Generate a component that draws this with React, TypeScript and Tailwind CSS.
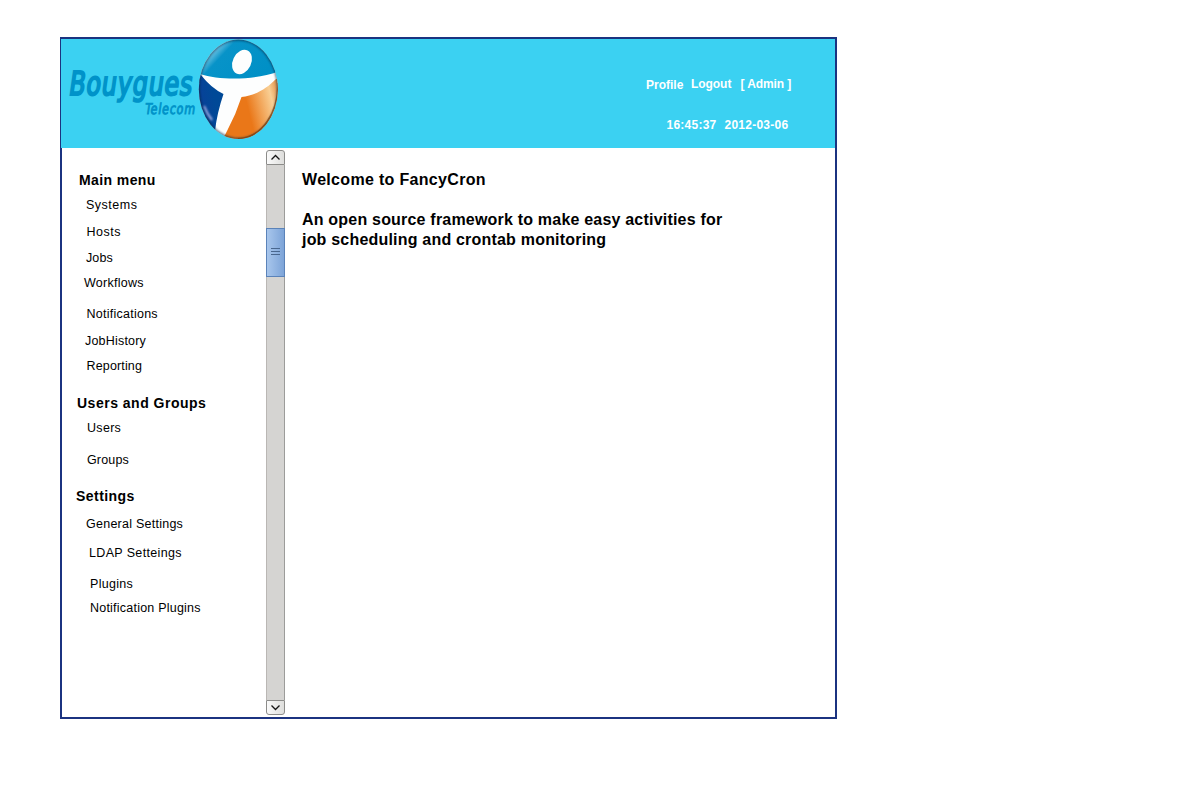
type Entry = { label: string; className: string };

const heading = "text-[14px] font-bold";
const item = "text-[12.5px]";

const menu: Entry[] = [
  { label: "Main menu", className: `${heading} mt-[22px] ml-[17px] tracking-[0.4px]` },
  { label: "Systems", className: `${item} mt-[5px] ml-[24px] tracking-[0.5px]` },
  { label: "Hosts", className: `${item} mt-[7px] ml-[24.5px] tracking-[0.5px]` },
  { label: "Jobs", className: `${item} mt-[6px] ml-[24px] tracking-[0.1px]` },
  { label: "Workflows", className: `${item} mt-[5px] ml-[22px] tracking-[0.25px]` },
  { label: "Notifications", className: `${item} mt-[11px] ml-[24.5px] tracking-[0.25px]` },
  { label: "JobHistory", className: `${item} mt-[7px] ml-[23px] tracking-[0.2px]` },
  { label: "Reporting", className: `${item} mt-[5px] ml-[24.5px] tracking-[0.15px]` },
  { label: "Users and Groups", className: `${heading} mt-[17px] ml-[15px] tracking-[0.5px]` },
  { label: "Users", className: `${item} mt-[5px] ml-[25px] tracking-[0.3px]` },
  { label: "Groups", className: `${item} mt-[12px] ml-[25px] tracking-[0.15px]` },
  { label: "Settings", className: `${heading} mt-[16px] ml-[14px] tracking-[0.45px]` },
  { label: "General Settings", className: `${item} mt-[8px] ml-[24px] tracking-[0.25px]` },
  { label: "LDAP Setteings", className: `${item} mt-[9px] ml-[27px] tracking-[0.35px]` },
  { label: "Plugins", className: `${item} mt-[11px] ml-[28px] tracking-[0.3px]` },
  { label: "Notification Plugins", className: `${item} mt-[4px] ml-[28px] tracking-[0.22px]` },
];

function Logo() {
  return (
    <svg className="block h-[109px] w-[230px]" viewBox="61 39 230 109">
      <defs>
        <clipPath id="oval">
          <ellipse cx="238.3" cy="89.3" rx="39.5" ry="49.7" />
        </clipPath>
        <linearGradient id="sky" x1="0" y1="0" x2="1" y2="0.45">
          <stop offset="0.08" stopColor="#37a9d4" />
          <stop offset="0.22" stopColor="#a5def2" />
          <stop offset="0.42" stopColor="#0793c8" />
          <stop offset="1" stopColor="#0090c6" />
        </linearGradient>
        <linearGradient id="navy" x1="0" y1="0.6" x2="0.65" y2="0.3">
          <stop offset="0" stopColor="#062c70" />
          <stop offset="0.5" stopColor="#064398" />
          <stop offset="1" stopColor="#004997" />
        </linearGradient>
        <linearGradient id="amber" x1="0" y1="0.6" x2="1" y2="0.35">
          <stop offset="0.45" stopColor="#ea7718" />
          <stop offset="0.83" stopColor="#f9cf94" />
          <stop offset="1" stopColor="#dc8135" />
        </linearGradient>
        <filter id="soft" x="-20%" y="-20%" width="140%" height="140%">
          <feGaussianBlur stdDeviation="1.2" />
        </filter>
      </defs>
      <g fill="#0093c9" stroke="#0093c9" fontFamily="'DejaVu Sans Condensed', 'DejaVu Sans', sans-serif">
        <text transform="translate(68 95) skewX(-8) scale(0.8 1)" fontSize="33" strokeWidth="2" textLength="154" lengthAdjust="spacing">Bouygues</text>
        <text transform="translate(144.5 113.7) skewX(-8) scale(0.82 1)" fontSize="15" strokeWidth="0.9" textLength="61" lengthAdjust="spacing">Telecom</text>
      </g>
      <g clipPath="url(#oval)">
        <rect x="198" y="39" width="81" height="101" fill="#fdfefe" />
        <path d="M198 38H280V71C258 80 221 81 200 74L196 75Z" fill="url(#sky)" />
        <path d="M196 72L201 75Q211 88 223.5 94Q217 113 215 131L208 138L194 120Z" fill="url(#navy)" />
        <path d="M241.5 97C257 95 267 88 276 79L284 79V145H220Q224 137 228 129Q236 114 241.5 97Z" fill="url(#amber)" />
        <path d="M204 106Q207 114 212 120" fill="none" stroke="#d9d5fb" strokeOpacity="0.8" strokeWidth="2" filter="url(#soft)" />
        <ellipse cx="238.3" cy="89.3" rx="40" ry="50" fill="none" stroke="#102a43" strokeOpacity="0.7" strokeWidth="2.6" filter="url(#soft)" />
        <path d="M199 83C198 68 205 46 227 41" fill="none" stroke="#06567d" strokeWidth="1.2" />
        <path d="M278 83C279 111 263 138 238 139" fill="none" stroke="#7f420d" strokeOpacity="0.7" strokeWidth="2" />
      </g>
      <ellipse cx="242" cy="62" rx="9.2" ry="12.7" transform="rotate(26 242 62)" fill="#fdfefe" />
    </svg>
  );
}

function Scrollbar() {
  return (
    <div className="mt-[2px] flex h-[565px] w-[19px] flex-col">
      <div className="flex h-[15px] shrink-0 items-center justify-center rounded-t-[3px] border border-[#8c8c8a] bg-gradient-to-r from-[#fafafa] to-[#dededc]">
        <svg className="h-[7px] w-[11px]" viewBox="0 0 11 7" fill="none" stroke="#151515" strokeWidth="1.3">
          <path d="M1.5 5.5L5.5 1.5L9.5 5.5" />
        </svg>
      </div>
      <div className="flex flex-1 flex-col border-r border-l border-r-[#9c9c9a] border-l-[#bab7b4] bg-[#d5d4d2]">
        <div className="-mx-px mt-[63px] flex h-[49px] flex-col items-center justify-center gap-[2px] border border-[#5b83b9] bg-gradient-to-r from-[#a8c6ec] to-[#7da4d8] pb-[2px]">
          <div className="h-px w-[9px] bg-[#49678f]" />
          <div className="h-px w-[9px] bg-[#49678f]" />
          <div className="h-px w-[9px] bg-[#49678f]" />
        </div>
      </div>
      <div className="flex h-[15px] shrink-0 items-center justify-center rounded-b-[3px] border border-[#8c8c8a] bg-gradient-to-r from-[#fafafa] to-[#dededc]">
        <svg className="h-[7px] w-[11px]" viewBox="0 0 11 7" fill="none" stroke="#151515" strokeWidth="1.3">
          <path d="M1.5 1.5L5.5 5.5L9.5 1.5" />
        </svg>
      </div>
    </div>
  );
}

export default function App() {
  return (
    <div className="h-[800px] w-[1200px] overflow-hidden bg-white pt-[37px] pl-[60px] font-['Liberation_Sans',Arial,sans-serif] text-black">
      <div className="flex h-[682px] w-[777px] flex-col border-2 border-[#1b3380]">
        <header className="-ml-px flex h-[109px] shrink-0 justify-between bg-[#3bd1f2]">
          <Logo />
          <div className="flex w-[189px] flex-col text-[12px] font-bold whitespace-nowrap text-white">
            <nav className="mt-[35px] flex h-[20px] leading-[20px]">
              <span className="mt-px w-[45px]">Profile</span>
              <span className="w-[49.5px] tracking-[-0.05px]">Logout</span>
              <span className="tracking-[-0.1px]">[ Admin ]</span>
            </nav>
            <div className="mt-[21px] ml-[20.5px] flex h-[20px] leading-[20px]">
              <span className="w-[58px] tracking-[0.25px]">16:45:37</span>
              <span className="tracking-[0.25px]">2012-03-06</span>
            </div>
          </div>
        </header>
        <div className="flex min-h-0 flex-1">
          <nav className="flex w-[204px] shrink-0 flex-col">
            {menu.map((entry) => (
              <a key={entry.label} className={`h-[20px] leading-[20px] whitespace-nowrap ${entry.className}`}>
                {entry.label}
              </a>
            ))}
          </nav>
          <Scrollbar />
          <main className="pt-[22px] pl-[17px] text-[16px] leading-[20px] font-bold whitespace-nowrap">
            <h1 className="tracking-[0.32px]">Welcome to FancyCron</h1>
            <p className="mt-[20px] tracking-[0.2px]">
              An open source framework to make easy activities for
              <br />
              job scheduling and crontab monitoring
            </p>
          </main>
        </div>
      </div>
    </div>
  );
}
